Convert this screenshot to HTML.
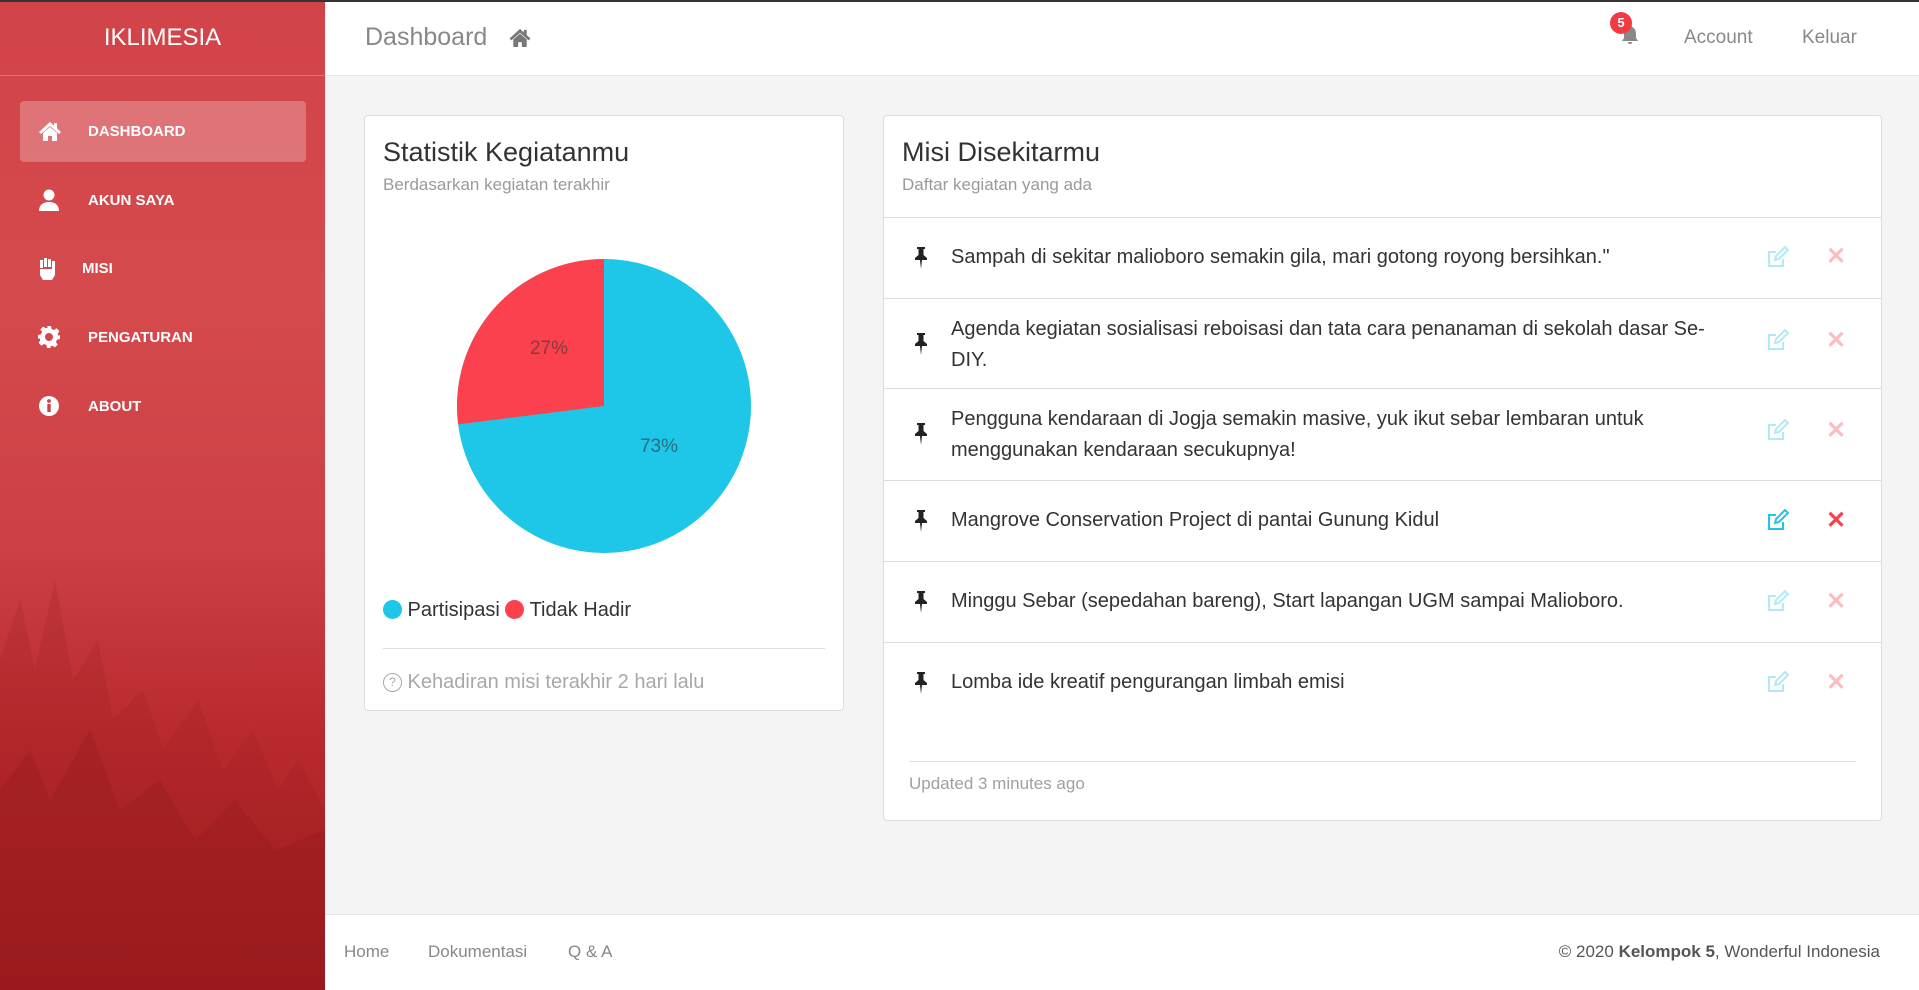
<!DOCTYPE html>
<html><head><meta charset="utf-8"><style>
*{box-sizing:border-box;margin:0;padding:0}
body{width:1919px;height:990px;overflow:hidden;background:#f4f4f4;font-family:"Liberation Sans",Arial,sans-serif;position:relative}
.tb{position:absolute;left:0;top:0;width:1919px;height:2px;background:#333;z-index:5}
.side{position:absolute;left:0;top:0;width:325px;height:990px;background:linear-gradient(180deg,#d1434a 0%,#d54a4c 30%,#cc4046 55%,#b8292d 75%,#a51d21 100%);overflow:hidden}
.brand{position:absolute;left:0;top:0;width:325px;height:76px;border-bottom:1px solid rgba(255,255,255,.25);color:#fff;font-size:24px;text-align:center;line-height:76px}
.nav{position:absolute;left:20px;width:286px;height:61px;color:#fff;font-weight:bold;font-size:15px;line-height:61px;border-radius:4px}
.nav.act{background:rgba(255,255,255,.25)}
.nav svg{position:absolute;left:18px;top:19px}
.nav span{position:absolute;left:68px}
.top{position:absolute;left:325px;top:0;right:0;height:76px;background:#fff;border-bottom:1px solid #e4e4e4}
.card{position:absolute;background:#fff;border:1px solid #ddd;border-radius:4px}
.h{font-size:27px;color:#333}
.sub{font-size:17px;color:#9a9a9a}
.row{position:absolute;left:0;right:0;border-top:1px solid #ddd}
.row .t{position:absolute;left:67px;font-size:20px;color:#333;line-height:31px;width:780px}
.pin{position:absolute;left:30px}
.ed{position:absolute;left:883px}
.x{position:absolute;left:942px;font-size:24px;font-weight:bold}
.foot{position:absolute;left:325px;right:0;top:914px;height:76px;background:#fff;border-top:1px solid #e4e4e4;font-size:17px;color:#888}
</style></head><body>
<div class="tb"></div>
<div class="side">
<svg style="position:absolute;left:0;top:540px" width="325" height="450"><g fill="#8f1a1d" opacity=".18"><path d="M0 450V120l20-60 15 70 20-90 18 100 25-40 15 80 30-30 20 60 35-50 25 70 30-40 25 60 20-30 27 50V450z"/></g><g fill="#7a1316" opacity=".18"><path d="M0 450V250l30-40 20 50 40-70 30 80 40-30 35 60 40-40 40 50 50-20V450z"/></g></svg>
<div class="brand">IKLIMESIA</div>
<div class="nav act" style="top:101px"><svg width="24" height="22" viewBox="0 0 24 22" fill="#fff"><path d="M12 2 1 12l2 2 9-8 9 8 2-2-4-3.6V3h-3v2.7zM5 13v8h5v-5h4v5h5v-8l-7-6z"/></svg><span>DASHBOARD</span></div>
<div class="nav" style="top:170px"><svg width="22" height="24" viewBox="0 0 22 24" fill="#fff"><circle cx="11" cy="6" r="5.5"/><path d="M1 22c0-6 4-9 10-9s10 3 10 9z"/></svg><span>AKUN SAYA</span></div>
<div class="nav" style="top:238px"><svg width="18" height="24" viewBox="0 0 18 24" fill="#fff"><path d="M2 3h3v8H2zM6 1h3v9H6zM10 2h3v8h-3zM14 4h3v8h-3zM2 12h15v6l-3 5H5l-3-5z"/></svg><span style="left:62px">MISI</span></div>
<div class="nav" style="top:307px"><svg width="22" height="22" viewBox="0 0 22 22" fill="#fff"><path d="M9 0h4l.6 3 2.4 1 2.6-1.7 2.8 2.8L19.7 7.7 20.6 10 22 9v4l-3 .6-1 2.4 1.7 2.6-2.8 2.8-2.6-1.7-2.3.9L13 22H9l-.6-3-2.4-1-2.6 1.7-2.8-2.8L2.3 14.3 1.4 12 0 13V9l3-.6 1-2.4L2.3 3.4l2.8-2.8 2.6 1.7L10 1.4zM11 7a4 4 0 100 8 4 4 0 000-8z"/></svg><span>PENGATURAN</span></div>
<div class="nav" style="top:376px"><svg width="22" height="22" viewBox="0 0 22 22"><circle cx="11" cy="11" r="10" fill="#fff"/><rect x="9.3" y="9" width="3.4" height="8" fill="#c9444a"/><circle cx="11" cy="6" r="1.9" fill="#c9444a"/></svg><span>ABOUT</span></div>
</div>
<div class="top">
<div style="position:absolute;left:40px;top:23px;font-size:25px;color:#888">Dashboard</div>
<svg style="position:absolute;left:183px;top:27px" width="24" height="21" viewBox="0 0 24 22" fill="#777"><path d="M12 2 1 12l2 2 9-8 9 8 2-2-4-3.6V3h-3v2.7zM5 13v8h5v-5h4v5h5v-8l-7-6z"/></svg>
<svg style="position:absolute;left:1296px;top:24px" width="18" height="21" viewBox="0 0 18 21" fill="#888"><path d="M9 1a2 2 0 012 2c3 1 4 4 4 7v4l2 3H1l2-3v-4c0-3 1-6 4-7a2 2 0 012-2zM7 18h4a2 2 0 01-4 0z"/></svg>
<div style="position:absolute;left:1285px;top:12px;width:22px;height:22px;border-radius:50%;background:#f23a43;color:#fff;font-size:13px;font-weight:bold;text-align:center;line-height:22px">5</div>
<div style="position:absolute;left:1359px;top:27px;font-size:19px;color:#888">Account</div>
<div style="position:absolute;left:1477px;top:27px;font-size:19px;color:#888">Keluar</div>
</div>

<div class="card" style="left:364px;top:115px;width:480px;height:596px">
<div class="h" style="position:absolute;left:18px;top:21px">Statistik Kegiatanmu</div>
<div class="sub" style="position:absolute;left:18px;top:59px">Berdasarkan kegiatan terakhir</div>
<svg style="position:absolute;left:92px;top:143px" width="294" height="294" viewBox="-147 -147 294 294">
<circle r="147" fill="#1ec6e8"/>
<path d="M0 0V-147A147 147 0 0 0 -145.8 18.4Z" fill="#fc414e"/>
<text x="-55" y="-52" font-size="19" fill="#8a3a3a" font-family="Liberation Sans" text-anchor="middle">27%</text>
<text x="55" y="46" font-size="19" fill="#266f82" font-family="Liberation Sans" text-anchor="middle">73%</text>
</svg>
<div style="position:absolute;left:18px;top:483px;font-size:20px;color:#333"><span style="display:inline-block;width:19px;height:19px;border-radius:50%;background:#1ec6e8;vertical-align:-3px"></span> Partisipasi <span style="display:inline-block;width:19px;height:19px;border-radius:50%;background:#fc414e;vertical-align:-3px"></span> Tidak Hadir</div>
<div style="position:absolute;left:18px;right:18px;top:532px;border-top:1px solid #e0e0e0"></div>
<div style="position:absolute;left:18px;top:555px;font-size:20px;color:#a8a8a8"><span style="display:inline-block;width:19px;height:19px;border:1.5px solid #aaa;border-radius:50%;font-size:12px;text-align:center;line-height:16px;vertical-align:2px">?</span> Kehadiran misi terakhir 2 hari lalu</div>
</div>

<div class="card" style="left:883px;top:115px;width:999px;height:706px">
<div class="h" style="position:absolute;left:18px;top:21px">Misi Disekitarmu</div>
<div class="sub" style="position:absolute;left:18px;top:59px">Daftar kegiatan yang ada</div>
<div class="row" style="top:101px;height:81px"><svg class="pin" style="top:29px" width="14" height="22" viewBox="0 0 14 22" fill="#222"><path d="M3 0h8v2H9.5v6L13 11v2H8l-1 9-1-9H1v-2l3.5-3V2H3z"/></svg><div class="t" style="top:24px">Sampah di sekitar malioboro semakin gila, mari gotong royong bersihkan."</div><svg class="ed" style="top:28px;opacity:.35" width="22" height="22" viewBox="0 0 22 22" fill="none" stroke="#1ec6e8" stroke-width="2"><path d="M16 13v7H2V6h7"/><path d="M8 14l1-4 9-9 3 3-9 9z"/></svg><div class="x" style="top:24px;color:#fc414e;opacity:.35">✕</div></div>
<div class="row" style="top:182px;height:90px"><svg class="pin" style="top:34px" width="14" height="22" viewBox="0 0 14 22" fill="#222"><path d="M3 0h8v2H9.5v6L13 11v2H8l-1 9-1-9H1v-2l3.5-3V2H3z"/></svg><div class="t" style="top:15px">Agenda kegiatan sosialisasi reboisasi dan tata cara penanaman di sekolah dasar Se-<br>DIY.</div><svg class="ed" style="top:30px;opacity:.35" width="22" height="22" viewBox="0 0 22 22" fill="none" stroke="#1ec6e8" stroke-width="2"><path d="M16 13v7H2V6h7"/><path d="M8 14l1-4 9-9 3 3-9 9z"/></svg><div class="x" style="top:27px;color:#fc414e;opacity:.35">✕</div></div>
<div class="row" style="top:272px;height:92px"><svg class="pin" style="top:34px" width="14" height="22" viewBox="0 0 14 22" fill="#222"><path d="M3 0h8v2H9.5v6L13 11v2H8l-1 9-1-9H1v-2l3.5-3V2H3z"/></svg><div class="t" style="top:15px">Pengguna kendaraan di Jogja semakin masive, yuk ikut sebar lembaran untuk<br>menggunakan kendaraan secukupnya!</div><svg class="ed" style="top:30px;opacity:.35" width="22" height="22" viewBox="0 0 22 22" fill="none" stroke="#1ec6e8" stroke-width="2"><path d="M16 13v7H2V6h7"/><path d="M8 14l1-4 9-9 3 3-9 9z"/></svg><div class="x" style="top:27px;color:#fc414e;opacity:.35">✕</div></div>
<div class="row" style="top:364px;height:81px"><svg class="pin" style="top:29px" width="14" height="22" viewBox="0 0 14 22" fill="#222"><path d="M3 0h8v2H9.5v6L13 11v2H8l-1 9-1-9H1v-2l3.5-3V2H3z"/></svg><div class="t" style="top:24px">Mangrove Conservation Project di pantai Gunung Kidul</div><svg class="ed" style="top:28px" width="22" height="22" viewBox="0 0 22 22" fill="none" stroke="#1ec6e8" stroke-width="2"><path d="M16 13v7H2V6h7"/><path d="M8 14l1-4 9-9 3 3-9 9z"/></svg><div class="x" style="top:25px;color:#fc414e">✕</div></div>
<div class="row" style="top:445px;height:81px"><svg class="pin" style="top:29px" width="14" height="22" viewBox="0 0 14 22" fill="#222"><path d="M3 0h8v2H9.5v6L13 11v2H8l-1 9-1-9H1v-2l3.5-3V2H3z"/></svg><div class="t" style="top:24px">Minggu Sebar (sepedahan bareng), Start lapangan UGM sampai Malioboro.</div><svg class="ed" style="top:28px;opacity:.35" width="22" height="22" viewBox="0 0 22 22" fill="none" stroke="#1ec6e8" stroke-width="2"><path d="M16 13v7H2V6h7"/><path d="M8 14l1-4 9-9 3 3-9 9z"/></svg><div class="x" style="top:25px;color:#fc414e;opacity:.35">✕</div></div>
<div class="row" style="top:526px;height:81px"><svg class="pin" style="top:29px" width="14" height="22" viewBox="0 0 14 22" fill="#222"><path d="M3 0h8v2H9.5v6L13 11v2H8l-1 9-1-9H1v-2l3.5-3V2H3z"/></svg><div class="t" style="top:24px">Lomba ide kreatif pengurangan limbah emisi</div><svg class="ed" style="top:28px;opacity:.35" width="22" height="22" viewBox="0 0 22 22" fill="none" stroke="#1ec6e8" stroke-width="2"><path d="M16 13v7H2V6h7"/><path d="M8 14l1-4 9-9 3 3-9 9z"/></svg><div class="x" style="top:25px;color:#fc414e;opacity:.35">✕</div></div>
<div style="position:absolute;left:25px;right:25px;top:645px;border-top:1px solid #e0e0e0"></div>
<div style="position:absolute;left:25px;top:658px;font-size:17px;color:#a0a0a0">Updated 3 minutes ago</div>
</div>

<div class="foot">
<span style="position:absolute;left:19px;top:27px">Home</span>
<span style="position:absolute;left:103px;top:27px">Dokumentasi</span>
<span style="position:absolute;left:243px;top:27px">Q &amp; A</span>
<span style="position:absolute;right:39px;top:27px;color:#555">© 2020 <b>Kelompok 5</b>, Wonderful Indonesia</span>
</div>
</body></html>
